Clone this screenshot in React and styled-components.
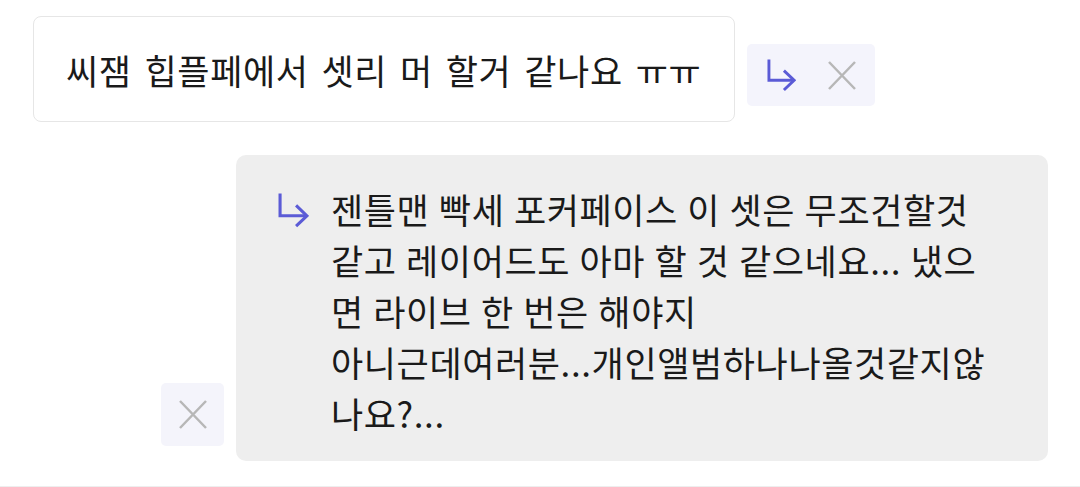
import React from 'react';
import styled, { createGlobalStyle } from 'styled-components';

const GlobalStyle = createGlobalStyle`
  html, body {
    margin: 0;
    padding: 0;
    background: #ffffff;
  }
  body {
    font-family: "Noto Sans CJK KR", "Noto Sans", sans-serif;
    color: #1a1a1a;
  }
`;

const Page = styled.div`
  box-sizing: border-box;
  height: 487px;
  padding: 16px 32px 0 33px;
  border-bottom: 1px solid #eeeeee;
  display: flex;
  flex-direction: column;
  gap: 33px;
  overflow: hidden;
`;

const QuestionRow = styled.div`
  display: flex;
  align-items: flex-start;
  gap: 12px;
`;

const QuestionBox = styled.div`
  box-sizing: border-box;
  height: 106px;
  padding: 0 33px 0 32px;
  display: flex;
  align-items: center;
  border: 1.5px solid #e6e6e6;
  border-radius: 8px;
  font-size: 35px;
  white-space: nowrap;
  letter-spacing: 0.6px;
  word-spacing: 4.5px;
`;

const ActionPill = styled.div`
  box-sizing: border-box;
  margin-top: 28px;
  height: 62px;
  padding: 0 19px 0 20px;
  display: flex;
  align-items: center;
  gap: 32px;
  background: #f4f4fc;
  border-radius: 5px;
`;

const AnswerRow = styled.div`
  display: flex;
  justify-content: flex-end;
  align-items: flex-end;
  gap: 12px;
`;

const CloseBox = styled.div`
  width: 63px;
  height: 63px;
  margin-bottom: 15px;
  display: flex;
  align-items: center;
  justify-content: center;
  background: #f4f4fb;
  border-radius: 5px;
`;

const Bubble = styled.div`
  box-sizing: border-box;
  width: 812px;
  padding: 28px 30px 23px 42px;
  display: flex;
  align-items: flex-start;
  gap: 22px;
  background: #eeeeee;
  border-radius: 10px;
`;

const ReplyIconWrap = styled.div`
  padding-top: 9px;
  flex-shrink: 0;
`;

const AnswerText = styled.div`
  font-size: 35px;
  line-height: 51px;
  white-space: nowrap;
  letter-spacing: 0.6px;
  word-spacing: 1px;
`;

function ReplyIcon({ size = 30 }) {
  return (
    <svg width={size} height={size * 1.17} viewBox="0 0 30 35" fill="none">
      <path d="M2 1.5 V23 H27" stroke="#5b5bd6" strokeWidth="3" strokeLinejoin="miter" />
      <path d="M17.5 13 L28 23 L17.5 33" stroke="#5b5bd6" strokeWidth="3" strokeLinejoin="miter" />
    </svg>
  );
}

function CloseIcon() {
  return (
    <svg width="28" height="29" viewBox="0 0 28 29" fill="none">
      <path d="M1 1 L27 28 M27 1 L1 28" stroke="#b7b7b7" strokeWidth="2.5" />
    </svg>
  );
}

const lines = [
  '젠틀맨 빡세 포커페이스 이 셋은 무조건할것',
  '같고 레이어드도 아마 할 것 같으네요... 냈으',
  '면 라이브 한 번은 해야지',
  '아니근데여러분...개인앨범하나나올것같지않',
  '나요?...',
];

function App() {
  return (
    <>
      <GlobalStyle />
      <Page>
        <QuestionRow>
          <QuestionBox>씨잼 힙플페에서 셋리 머 할거 같나요 ㅠㅠ</QuestionBox>
          <ActionPill>
            <ReplyIcon size={29} />
            <CloseIcon />
          </ActionPill>
        </QuestionRow>
        <AnswerRow>
          <CloseBox>
            <CloseIcon />
          </CloseBox>
          <Bubble>
            <ReplyIconWrap>
              <ReplyIcon size={31} />
            </ReplyIconWrap>
            <AnswerText>
              {lines.map((line, i) => (
                <div key={i}>{line}</div>
              ))}
            </AnswerText>
          </Bubble>
        </AnswerRow>
      </Page>
    </>
  );
}

export default App;
